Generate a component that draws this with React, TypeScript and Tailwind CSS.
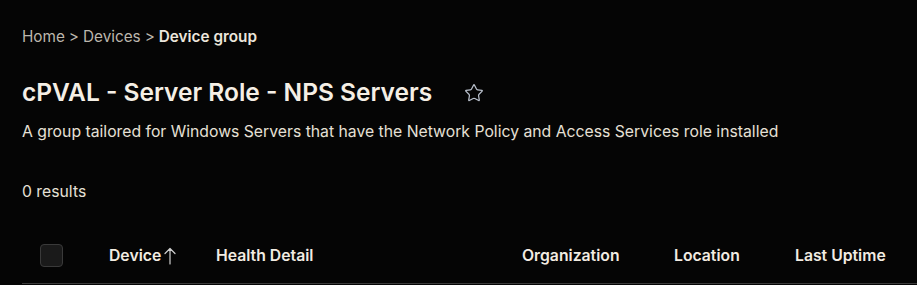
import { Star } from 'lucide-react';

const columns = [
  { key: 'org', label: 'Organization', width: 'w-[152px]' },
  { key: 'loc', label: 'Location', width: 'w-[121px]' },
  { key: 'uptime', label: 'Last Uptime', width: 'w-[140px]' },
];

function SortArrow() {
  return (
    <svg width="12" height="18" viewBox="0 0 12 18" fill="none" className="ml-[3px] text-[#cfcfcf]">
      <path d="M6 1.5V17M1 6.5L6 1.5L11 6.5" stroke="currentColor" strokeWidth="1.2" strokeLinecap="round" strokeLinejoin="round" />
    </svg>
  );
}

export default function App() {
  return (
    <div
      className="min-h-screen bg-[#050505] text-[#ece6dc] pl-[22px] overflow-hidden"
      style={{ fontFamily: 'Inter, "Noto Sans", sans-serif' }}
    >
      <nav className="pt-[27px] flex items-center text-[15.3px] leading-[20px]">
        <span className="text-[#bdb7ad]">Home</span>
        <span className="text-[#bdb7ad] mx-[4px]">&gt;</span>
        <span className="text-[#bdb7ad]">Devices</span>
        <span className="text-[#bdb7ad] mx-[4px]">&gt;</span>
        <span className="font-semibold text-[#ece6dc]">Device group</span>
      </nav>

      <div className="mt-[29px] flex items-center h-[32px]">
        <h1 className="text-[24.5px] leading-[32px] font-semibold text-[#f5efe5]">
          cPVAL - Server Role - NPS Servers
        </h1>
        <Star className="ml-[32px] mt-[1px] text-[#b9c0cc]" size={20} strokeWidth={1.5} />
      </div>

      <p className="mt-[13px] text-[15.75px] leading-[22px] text-[#e6e0d6] whitespace-nowrap">
        A group tailored for Windows Servers that have the Network Policy and Access Services role installed
      </p>

      <div className="mt-[38px] text-[15.75px] leading-[22px] text-[#e6e0d6]">0 results</div>

      <div className="mt-[25px] flex items-center h-[56px] border-b border-[#3a3a3a] text-[15.75px] font-semibold text-[#f2ece2] whitespace-nowrap">
        <div className="w-[87px] shrink-0 pl-[18px] flex items-center">
          <div className="w-[23px] h-[23px] rounded-[4px] bg-[#1a1a1a] border border-[#3a3a3a]" />
        </div>
        <div className="w-[107px] shrink-0 flex items-center">
          Device
          <SortArrow />
        </div>
        <div className="w-[306px] shrink-0">Health Detail</div>
        {columns.map((c) => (
          <div key={c.key} className={`${c.width} shrink-0`}>
            {c.label}
          </div>
        ))}
      </div>
    </div>
  );
}
